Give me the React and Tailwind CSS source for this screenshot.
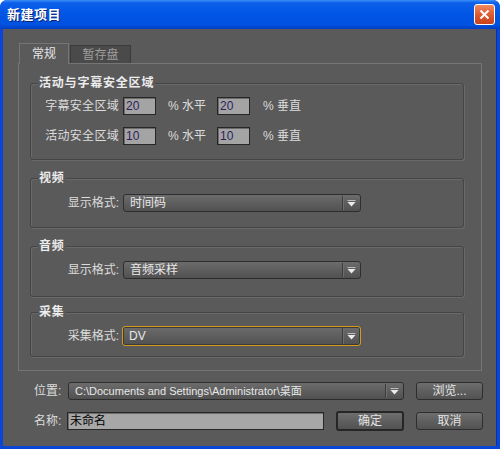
import React from 'react';

const font = "font-['Liberation_Sans','Noto_Sans_CJK_SC',sans-serif]";

function Arrow() {
  return (
    <svg width="9" height="7" viewBox="0 0 9 7">
      <rect x="0.5" y="0" width="8" height="1" fill="#bdbdbd" />
      <polygon points="0.5,2 8.5,2 4.5,6.5" fill="#ececec" />
    </svg>
  );
}

function Select({ value, width, focused }) {
  return (
    <div
      className={`flex h-full rounded-[3px] border ${
        focused ? 'border-[#d49a1a] shadow-[0_0_0_1px_#3a3a3a_inset]' : 'border-[#2e2e2e]'
      } bg-[linear-gradient(180deg,#6c6c6c_0%,#5e5e5e_50%,#515151_100%)]`}
      style={{ width }}
    >
      <div className="flex-1 flex items-center pl-[6px] text-[12px] leading-[14px] text-[#e8e8e8] whitespace-nowrap overflow-hidden">
        {value}
      </div>
      <div className="w-[18px] my-[1px] border-l border-[#3c3c3c] shadow-[inset_1px_0_0_#6e6e6e] flex items-center justify-center">
        <Arrow />
      </div>
    </div>
  );
}

function NumInput({ value }) {
  return (
    <div className="w-[33px] h-[18px] border border-[#262626] bg-[#a4a4a4] shadow-[inset_1px_1px_0_#6c6c6c] flex items-center pl-[2px] text-[12px] leading-[14px] text-[#2c1f5c]">
      {value}
    </div>
  );
}

function Group({ label, className, children }) {
  return (
    <div
      className={`relative w-[434px] ml-[11px] rounded-[3px] border border-[#454545] shadow-[inset_1px_1px_0_#6a6a6a,1px_1px_0_#6a6a6a] ${className}`}
    >
      <span className="absolute -top-[8px] left-[7px] px-[1px] bg-[#5a5a5a] text-[12px] leading-[14px] font-bold tracking-[0.8px] text-[#ececec]">
        {label}
      </span>
      {children}
    </div>
  );
}

function Button({ children, width, isDefault }) {
  return (
    <div
      className={`flex items-center justify-center rounded-[3px] text-[12px] leading-[14px] text-[#e4e4e4] bg-[linear-gradient(180deg,#6e6e6e_0%,#5f5f5f_50%,#525252_100%)] ${
        isDefault ? 'h-[20px] border-2 border-[#262626]' : 'h-[18px] border border-[#2e2e2e]'
      }`}
      style={{ width }}
    >
      {children}
    </div>
  );
}

export default function App() {
  return (
    <div className={`w-[500px] h-[449px] flex flex-col rounded-t-[7px] overflow-hidden bg-[#0a45d8] ${font}`}>
      {/* title bar */}
      <div className="h-[29px] flex items-center justify-between pl-[7px] pr-[5px] bg-[linear-gradient(180deg,#3d8ff7_0%,#0c5fe9_10%,#0055e5_50%,#0052e0_85%,#003fc2_100%)]">
        <span className="text-[13px] leading-[16px] font-bold text-white tracking-[0.5px] [text-shadow:1px_1px_0_#0a1f70]">
          新建项目
        </span>
        <div className="w-[21px] h-[21px] rounded-[3px] border border-white bg-[linear-gradient(180deg,#ef8a63_0%,#de5a30_50%,#c8421c_100%)] flex items-center justify-center">
          <svg width="11" height="11" viewBox="0 0 11 11">
            <path d="M1.5 1.5 L9.5 9.5 M9.5 1.5 L1.5 9.5" stroke="#ffffff" strokeWidth="2" />
          </svg>
        </div>
      </div>

      {/* body */}
      <div className="flex-1 mx-[3px] mb-[3px] bg-[#5a5a5a] flex flex-col border-r border-[#0a2fa8]">
        {/* tabs */}
        <div className="flex items-end pt-[14px] pl-[16px] -mb-[1px]">
          <div className="relative z-10 w-[50px] h-[21px] bg-[#5a5a5a] border border-b-0 border-[#757575] flex items-center justify-center text-[12px] leading-[14px] text-[#e6e6e6]">
            常规
          </div>
          <div className="w-[61px] h-[18px] mb-[1px] ml-[1px] bg-[#4a4a4a] border border-b-0 border-[#3a3a3a] flex items-center justify-center text-[12px] leading-[14px] text-[#9e9e9e]">
            暂存盘
          </div>
        </div>

        {/* tab panel */}
        <div className="ml-[15px] w-[464px] h-[308px] border border-[#757575]">
          <Group label="活动与字幕安全区域" className="mt-[19px] h-[77px] pt-[13px]">
            <div className="flex flex-col gap-[12px]">
              {[
                ['字幕安全区域', '20', '20'],
                ['活动安全区域', '10', '10'],
              ].map(([name, h, v]) => (
                <div key={name} className="flex items-center h-[18px] text-[12px] leading-[14px] text-[#dcdcdc]">
                  <span className="w-[88px] text-right tracking-[0.3px]">{name}</span>
                  <div className="ml-[4px]">
                    <NumInput value={h} />
                  </div>
                  <span className="ml-[12px] w-[49px]">% 水平</span>
                  <NumInput value={v} />
                  <span className="ml-[13px]">% 垂直</span>
                </div>
              ))}
            </div>
          </Group>

          <Group label="视频" className="mt-[18px] h-[50px] pt-[15px]">
            <div className="flex items-center h-[18px] text-[12px] leading-[14px] text-[#dcdcdc]">
              <span className="w-[88px] text-right">显示格式:</span>
              <div className="ml-[4px] h-[18px]">
                <Select value="时间码" width={238} />
              </div>
            </div>
          </Group>

          <Group label="音频" className="mt-[18px] h-[51px] pt-[14px]">
            <div className="flex items-center h-[18px] text-[12px] leading-[14px] text-[#dcdcdc]">
              <span className="w-[88px] text-right">显示格式:</span>
              <div className="ml-[4px] h-[18px]">
                <Select value="音频采样" width={238} />
              </div>
            </div>
          </Group>

          <Group label="采集" className="mt-[15px] h-[45px] pt-[13px]">
            <div className="flex items-center h-[20px] text-[12px] leading-[14px] text-[#dcdcdc]">
              <span className="w-[88px] text-right">采集格式:</span>
              <div className="ml-[3px] h-[20px]">
                <Select value="DV" width={239} focused />
              </div>
            </div>
          </Group>
        </div>

        {/* bottom rows */}
        <div className="mt-[11px] pl-[31px] flex items-center h-[18px] text-[12px] leading-[14px] text-[#dcdcdc]">
          <span className="w-[34px]">位置:</span>
          <div className="h-[18px]">
            <Select value={<span className="text-[11px]">C:\Documents and Settings\Administrator\桌面</span>} width={336} />
          </div>
          <div className="ml-[12px]">
            <Button width={67}>浏览...</Button>
          </div>
        </div>

        <div className="mt-[11px] pl-[31px] flex items-center h-[20px] text-[12px] leading-[14px] text-[#dcdcdc]">
          <span className="w-[33px]">名称:</span>
          <div className="w-[257px] h-[18px] border border-[#262626] bg-[#a7a7a7] shadow-[inset_1px_1px_0_#6c6c6c] flex items-center pl-[2px] text-[12px] leading-[14px] text-black">
            未命名
          </div>
          <div className="ml-[12px]">
            <Button width={68} isDefault>
              确定
            </Button>
          </div>
          <div className="ml-[12px]">
            <Button width={67}>取消</Button>
          </div>
        </div>
      </div>
    </div>
  );
}
